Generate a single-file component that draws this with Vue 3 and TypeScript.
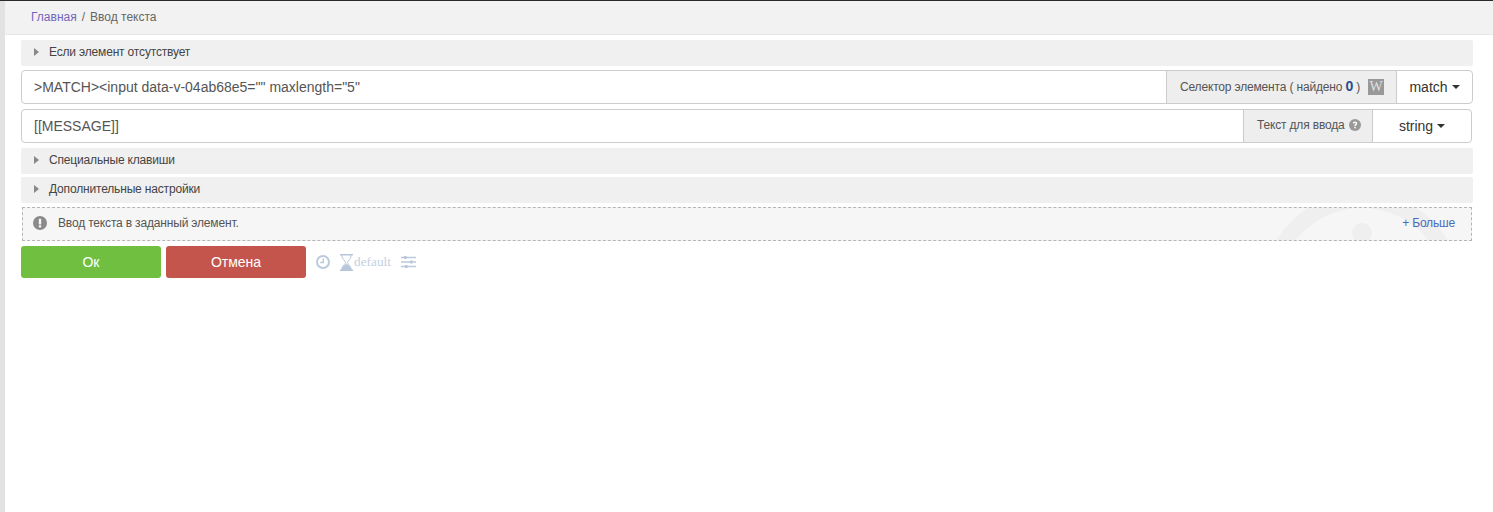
<script setup lang="ts">
// Экран действия "Ввод текста"
const sections = {
  missing: "Если элемент отсутствует",
  keys: "Специальные клавиши",
  extra: "Дополнительные настройки",
};
</script>

<template>
  <div class="page">
    <div class="side"></div>
    <div class="main">
      <div class="crumbs">
        <a class="crumbs__home">Главная</a>
        <span class="crumbs__sep">/</span>
        <span class="crumbs__cur">Ввод текста</span>
      </div>
      <div class="body">
        <div class="fold fold--first"><i class="tri"></i>{{ sections.missing }}</div>

        <div class="group group--sel">
          <div class="group__value">&gt;MATCH&gt;&lt;input data-v-04ab68e5="" maxlength="5"</div>
          <div class="group__addon addon-sel">
            <span>Селектор элемента ( найдено <b>0</b> )</span>
            <span class="wiki">W</span>
          </div>
          <div class="group__btn btn-match">match<i class="caret"></i></div>
        </div>

        <div class="group group--txt">
          <div class="group__value">[[MESSAGE]]</div>
          <div class="group__addon addon-txt">
            <span>Текст для ввода</span>
            <svg class="help" viewBox="0 0 12 12" width="12" height="12">
              <circle cx="6" cy="6" r="6" fill="#999" />
              <path d="M3.800 4.600C3.800 3.300 4.800 2.500 6 2.500s2.200.7 2.200 1.900c0 1.500-1.500 1.500-1.500 2.700H5.300c0-1.900 1.400-1.800 1.400-2.600 0-.4-.3-.7-.7-.7-.5 0-.8.300-.8.800z" fill="#fff" />
              <rect x="5.300" y="7.800" width="1.400" height="1.500" fill="#fff" />
            </svg>
          </div>
          <div class="group__btn btn-string">string<i class="caret"></i></div>
        </div>

        <div class="fold fold--keys"><i class="tri"></i>{{ sections.keys }}</div>
        <div class="fold fold--extra"><i class="tri"></i>{{ sections.extra }}</div>

        <div class="note">
          <svg class="note__bg" viewBox="0 0 200 34" width="200" height="34">
            <circle cx="100" cy="84" r="92" fill="none" stroke="#efefef" stroke-width="16" />
            <circle cx="100" cy="25" r="10" fill="#efefef" />
          </svg>
          <svg class="note__icon" viewBox="0 0 14 14" width="14" height="14">
            <circle cx="7" cy="7" r="7" fill="#8a8a8a" />
            <rect x="5.800" y="2.800" width="2.400" height="5.600" rx=".6" fill="#f6f6f6" />
            <rect x="5.800" y="9.200" width="2.400" height="2.200" rx=".5" fill="#f6f6f6" />
          </svg>
          <span class="note__text">Ввод текста в заданный элемент.</span>
          <a class="note__more">+ Больше</a>
        </div>

        <div class="actions">
          <button class="act act--ok">Ок</button>
          <button class="act act--cancel">Отмена</button>
          <svg class="tool tool--clock" viewBox="0 0 14 14" width="14" height="14">
            <circle cx="7" cy="7" r="6" fill="none" stroke="#bccadc" stroke-width="2" />
            <path d="M7.300 3.400v4H4.200" fill="none" stroke="#bccadc" stroke-width="1.500" />
          </svg>
          <svg class="tool tool--glass" viewBox="0 0 13 17" width="13" height="17">
            <path d="M0 .8h13M0 16.200h13" stroke="#b7c6da" stroke-width="1.600" fill="none" />
            <path d="M1.800 1c0 4.500 3.700 5.500 3.700 7.500S1.800 11.500 1.800 16M11.200 1c0 4.500-3.700 5.500-3.700 7.500s3.700 3 3.700 7.500" stroke="#b7c6da" stroke-width="1" fill="none" />
            <path d="M1.500 16c.4-3.500 3-4.300 5-6.500 2 2.200 4.600 3 5 6.500z" fill="#b7c6da" />
          </svg>
          <span class="tool__label">default</span>
          <svg class="tool tool--sliders" viewBox="0 0 15 14" width="15" height="14">
            <path d="M0 2.500h15M0 7h15M0 11.500h15" stroke="#bccadc" stroke-width="1.300" />
            <rect x="3" y="1" width="2.500" height="3" fill="#b7c6da" />
            <rect x="9" y="5.500" width="2.500" height="3" fill="#b7c6da" />
            <rect x="4" y="10" width="2.500" height="3" fill="#b7c6da" />
          </svg>
        </div>
      </div>
    </div>
  </div>
</template>

<style scoped>
.page {
  display: flex;
  height: 512px;
  overflow: hidden;
  border-top: 1px solid #2a2a2a;
  box-sizing: border-box;
  font-family: "Liberation Sans", Arial, sans-serif;
  font-size: 12px;
  letter-spacing: -0.17px;
  color: #555;
  background: #fff;
}
.side {
  width: 5px;
  flex: none;
  background: #e2e2e2;
}
.main {
  flex: 1;
  min-width: 0;
}
.crumbs {
  height: 34px;
  box-sizing: border-box;
  padding: 9px 0 0 26px;
  background: #f2f2f2;
  border-bottom: 1px solid #e6e6e6;
  line-height: 14px;
  letter-spacing: 0;
  color: #666;
}
.crumbs__home {
  color: #7266ba;
}
.crumbs__sep {
  margin: 0 5px;
}
.body {
  padding: 5px 20px 0 16px;
}
.fold {
  display: flex;
  align-items: center;
  height: 26px;
  box-sizing: border-box;
  padding: 0 0 2px 13px;
  background: #f0f0f0;
  border-radius: 2px;
  color: #444;
}
.fold--keys {
  margin-top: 5px;
}
.fold--extra {
  margin-top: 3px;
}
.tri {
  width: 0;
  height: 0;
  margin-right: 10px;
  border-left: 5px solid #888;
  border-top: 4px solid transparent;
  border-bottom: 4px solid transparent;
}
.group {
  display: flex;
  height: 34px;
  box-sizing: border-box;
  border: 1px solid #ccc;
  border-radius: 4px;
  overflow: hidden;
  margin-top: 4px;
}
.group--txt {
  margin-top: 5px;
  margin-right: 1px;
}
.group__value {
  flex: 1;
  min-width: 0;
  padding-left: 12px;
  line-height: 32px;
  font-size: 14px;
  letter-spacing: 0;
  color: #555;
}
.group__addon {
  display: flex;
  align-items: center;
  box-sizing: border-box;
  padding: 0 0 2px 13px;
  background: #eee;
  border-left: 1px solid #ccc;
  color: #555;
  white-space: nowrap;
}
.addon-sel {
  width: 230px;
}
.addon-sel b {
  color: #2a4d8f;
  font-size: 14px;
}
.addon-txt {
  width: 129px;
}
.wiki {
  width: 16px;
  height: 16px;
  margin: 2px 0 0 8px;
  background: #999;
  color: #e0e0e0;
  font-family: "Liberation Serif", serif;
  font-size: 14px;
  line-height: 16px;
  letter-spacing: 0;
  text-align: center;
}
.help {
  margin-left: 4px;
}
.group__btn {
  display: flex;
  align-items: center;
  justify-content: center;
  box-sizing: border-box;
  border-left: 1px solid #ccc;
  font-size: 14px;
  letter-spacing: 0;
  color: #333;
}
.btn-match {
  width: 76px;
}
.btn-string {
  width: 99px;
}
.caret {
  width: 0;
  height: 0;
  margin-left: 4px;
  border-top: 4px solid #333;
  border-left: 4px solid transparent;
  border-right: 4px solid transparent;
}
.note {
  position: relative;
  display: flex;
  align-items: center;
  height: 34px;
  box-sizing: border-box;
  margin: 4px 1px 0 1px;
  padding: 0 16px 2px 10px;
  background: #f6f6f6;
  border: 1px dashed #b5b5b5;
  overflow: hidden;
}
.note__icon {
  position: relative;
  flex: none;
  margin-right: 11px;
}
.note__text {
  position: relative;
  flex: 1;
}
.note__more {
  position: relative;
  color: #4a6bbd;
}
.note__bg {
  position: absolute;
  right: 9px;
  top: 0;
}
.actions {
  display: flex;
  align-items: center;
  margin-top: 5px;
}
.act {
  width: 140px;
  height: 32px;
  border: 0;
  border-radius: 3px;
  color: #fff;
  font-family: inherit;
  font-size: 14px;
  padding: 0;
}
.act--ok {
  background: #70bf41;
}
.act--cancel {
  margin-left: 5px;
  background: #c4554d;
}
.tool--clock {
  margin-left: 10px;
}
.tool--glass {
  margin-left: 10px;
}
.tool__label {
  margin-left: 1px;
  font-family: "Liberation Serif", serif;
  font-size: 13.3px;
  letter-spacing: 0;
  color: #c3cfdf;
}
.tool--sliders {
  margin-left: 10px;
}
</style>
